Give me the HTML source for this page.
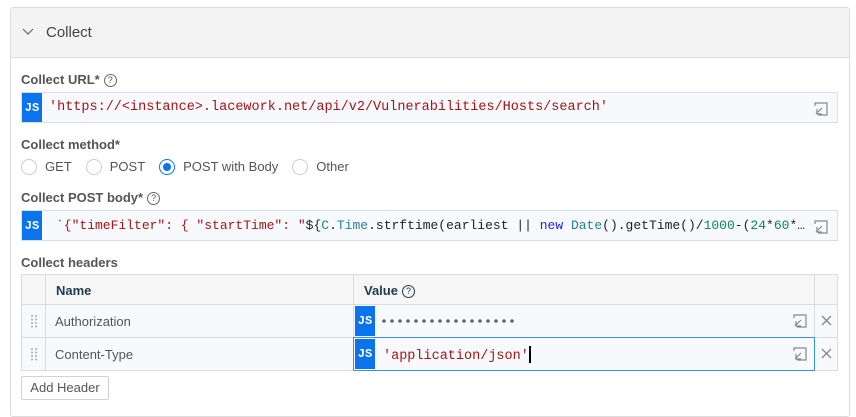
<!DOCTYPE html>
<html><head><style>
*{box-sizing:border-box;margin:0;padding:0}
body{width:856px;height:408px;background:#fff;font-family:"Liberation Sans",sans-serif;color:#333;position:relative;overflow:hidden}
.abs{position:absolute}
.panel{left:10px;top:7px;width:840px;height:410px;border:1px solid #dcdcdc;border-radius:3px}
.hdr{left:11px;top:8px;width:838px;height:50px;background:#f3f3f3;border-bottom:1px solid #dcdcdc}
.lbl{font-size:13px;color:#555;font-weight:bold}
.inp{border:1px solid #d6e0ea;background:#f7f9fc;height:31px}
.js{position:absolute;left:0;top:0;bottom:0;width:20px;background:#0a74ee;color:#fff;font-family:"Liberation Mono",monospace;font-weight:bold;font-size:12px;display:flex;align-items:center;justify-content:center}
.code{position:absolute;top:0;bottom:0;display:flex;align-items:center;font-family:"Liberation Mono",monospace;font-size:13.5px;white-space:nowrap}
.s{color:#a31515}.k{color:#2222ee}.t{color:#267f99}.n{color:#098658}
.q{display:inline-block;width:13px;height:13px;border:1px solid #666;border-radius:50%;font-size:9px;line-height:11px;text-align:center;color:#555;vertical-align:middle;margin-left:4px;font-weight:normal}
.rad{display:inline-block;width:16px;height:16px;border:1px solid #c8ccd0;border-radius:50%;vertical-align:middle;margin-right:8px;position:relative}
.rad.on{border-color:#0a74ee}
.rad.on:after{content:"";position:absolute;left:3px;top:3px;width:8px;height:8px;border-radius:50%;background:#0a74ee}
.ro{font-size:13px;color:#555;margin-right:14px;vertical-align:middle}
.exp{position:absolute;right:8px;top:8px}
.cell{position:absolute;border-right:1px solid #dcdcdc;border-bottom:1px solid #dcdcdc}
</style></head><body>
<div class="abs panel"></div>
<div class="abs hdr"></div>
<svg class="abs" style="left:22px;top:27px" width="12" height="10"><path d="M1 2 L6 7 L11 2" fill="none" stroke="#666" stroke-width="1.2"/></svg>
<div class="abs" style="left:46px;top:24px;font-size:15px;color:#444">Collect</div>

<div class="abs lbl" style="left:21px;top:72px">Collect URL*<span class="q">?</span></div>
<div class="abs inp" style="left:21px;top:92px;width:817px">
 <div class="js">JS</div>
 <div class="code s" style="left:27px">'https://&lt;instance&gt;.lacework.net/api/v2/Vulnerabilities/Hosts/search'</div>
 <svg class="exp" width="16" height="16"><path d="M2 5V2h12v12H5M3 13l6-6M4 8v5h5" fill="none" stroke="#888" stroke-width="1.2"/></svg>
</div>

<div class="abs lbl" style="left:21px;top:137px">Collect method*</div>
<div class="abs" style="left:21px;top:158px;white-space:nowrap">
 <span class="rad"></span><span class="ro">GET</span><span class="rad"></span><span class="ro">POST</span><span class="rad on"></span><span class="ro">POST with Body</span><span class="rad"></span><span class="ro">Other</span>
</div>

<div class="abs lbl" style="left:21px;top:190px">Collect POST body*<span class="q">?</span></div>
<div class="abs inp" style="left:21px;top:210px;width:817px">
 <div class="js">JS</div>
 <div class="code" style="left:34px;color:#222;font-size:13px"><span class="s">`{"timeFilter": { "startTime": "</span>${<span class="t">C</span>.<span class="t">Time</span>.strftime(earliest || <span class="k">&nbsp;new&nbsp;</span><span class="t">Date</span>().getTime()/<span class="n">1000</span>-(<span class="n">24</span>*<span class="n">60</span>*…</div>
 <div style="position:absolute;right:0;top:0;bottom:0;width:28px;background:#f7f9fc"></div>
 <svg class="exp" width="16" height="16"><path d="M2 5V2h12v12H5M3 13l6-6M4 8v5h5" fill="none" stroke="#888" stroke-width="1.2"/></svg>
</div>

<div class="abs lbl" style="left:21px;top:255px">Collect headers</div>
<div class="abs" style="left:21px;top:274px;width:817px;height:97px;border-left:1px solid #dcdcdc;border-top:1px solid #dcdcdc"></div>
<div class="cell" style="left:22px;top:275px;width:24px;height:30px;background:#f6f6f6"></div>
<div class="cell" style="left:46px;top:275px;width:308px;height:30px;background:#f6f6f6"></div>
<div class="cell" style="left:354px;top:275px;width:461px;height:30px;background:#f6f6f6"></div>
<div class="cell" style="left:815px;top:275px;width:23px;height:30px;background:#f6f6f6"></div>
<div class="abs" style="left:56px;top:283px;font-size:13px;font-weight:bold;color:#1f3a4d">Name</div>
<div class="abs" style="left:364px;top:283px;font-size:13px;font-weight:bold;color:#1f3a4d">Value<span class="q" style="border-color:#1f3a4d;color:#1f3a4d">?</span></div>

<div class="cell" style="left:22px;top:305px;width:24px;height:33px;background:#f7f9fc"></div>
<div class="cell" style="left:46px;top:305px;width:308px;height:33px;background:#f7f9fc"></div>
<div class="cell" style="left:354px;top:305px;width:461px;height:33px;background:#f7f9fc"></div>
<div class="cell" style="left:815px;top:305px;width:23px;height:33px;background:#f7f9fc"></div>
<div class="cell" style="left:22px;top:338px;width:24px;height:33px;background:#f7f9fc"></div>
<div class="cell" style="left:46px;top:338px;width:308px;height:33px;background:#f7f9fc"></div>
<div class="cell" style="left:815px;top:338px;width:23px;height:33px;background:#f7f9fc"></div>
<div class="abs" style="left:353px;top:337px;width:462px;height:34px;background:#f7f9fc;border:1px solid #3b8ef0"></div>

<svg class="abs" style="left:30px;top:314px" width="8" height="14"><g fill="#aaa"><circle cx="2" cy="2" r="1"/><circle cx="6" cy="2" r="1"/><circle cx="2" cy="5.5" r="1"/><circle cx="6" cy="5.5" r="1"/><circle cx="2" cy="9" r="1"/><circle cx="6" cy="9" r="1"/><circle cx="2" cy="12.5" r="1"/><circle cx="6" cy="12.5" r="1"/></g></svg>
<svg class="abs" style="left:30px;top:347px" width="8" height="14"><g fill="#aaa"><circle cx="2" cy="2" r="1"/><circle cx="6" cy="2" r="1"/><circle cx="2" cy="5.5" r="1"/><circle cx="6" cy="5.5" r="1"/><circle cx="2" cy="9" r="1"/><circle cx="6" cy="9" r="1"/><circle cx="2" cy="12.5" r="1"/><circle cx="6" cy="12.5" r="1"/></g></svg>
<div class="abs" style="left:55px;top:314px;font-size:13px;color:#555">Authorization</div>
<div class="abs" style="left:55px;top:347px;font-size:13px;color:#555">Content-Type</div>

<div class="abs" style="left:355px;top:306px;width:20px;height:30px;background:#0a74ee;color:#fff;font-family:'Liberation Mono',monospace;font-weight:bold;font-size:12px;display:flex;align-items:center;justify-content:center">JS</div>
<svg class="abs" style="left:381px;top:318px" width="135" height="6"><g fill="#666">
<circle cx="3" cy="3" r="1.8"/><circle cx="11" cy="3" r="1.8"/><circle cx="19" cy="3" r="1.8"/><circle cx="27" cy="3" r="1.8"/><circle cx="35" cy="3" r="1.8"/><circle cx="43" cy="3" r="1.8"/><circle cx="51" cy="3" r="1.8"/><circle cx="59" cy="3" r="1.8"/><circle cx="67" cy="3" r="1.8"/><circle cx="75" cy="3" r="1.8"/><circle cx="83" cy="3" r="1.8"/><circle cx="91" cy="3" r="1.8"/><circle cx="99" cy="3" r="1.8"/><circle cx="107" cy="3" r="1.8"/><circle cx="115" cy="3" r="1.8"/><circle cx="123" cy="3" r="1.8"/><circle cx="131" cy="3" r="1.8"/></g></svg>
<svg class="abs" style="left:792px;top:313px" width="16" height="16"><path d="M2 5V2h12v12H5M3 13l6-6M4 8v5h5" fill="none" stroke="#888" stroke-width="1.2"/></svg>
<div class="abs" style="left:355px;top:339px;width:20px;height:30px;background:#0a74ee;color:#fff;font-family:'Liberation Mono',monospace;font-weight:bold;font-size:12px;display:flex;align-items:center;justify-content:center">JS</div>
<div class="abs s" style="left:383px;top:346px;font-family:'Liberation Mono',monospace;font-size:13.5px">'application/json'<span style="display:inline-block;width:2px;height:17px;background:#000;vertical-align:-4px"></span></div>
<svg class="abs" style="left:792px;top:346px" width="16" height="16"><path d="M2 5V2h12v12H5M3 13l6-6M4 8v5h5" fill="none" stroke="#888" stroke-width="1.2"/></svg>
<svg class="abs" style="left:821px;top:315px" width="11" height="11"><path d="M1 1L10 10M10 1L1 10" stroke="#888" stroke-width="1.3"/></svg>
<svg class="abs" style="left:821px;top:348px" width="11" height="11"><path d="M1 1L10 10M10 1L1 10" stroke="#888" stroke-width="1.3"/></svg>

<div class="abs" style="left:21px;top:376px;width:88px;height:24px;border:1px solid #ccd3da;border-radius:2px;font-size:13px;color:#555;text-align:center;line-height:22px">Add Header</div>
</body></html>
